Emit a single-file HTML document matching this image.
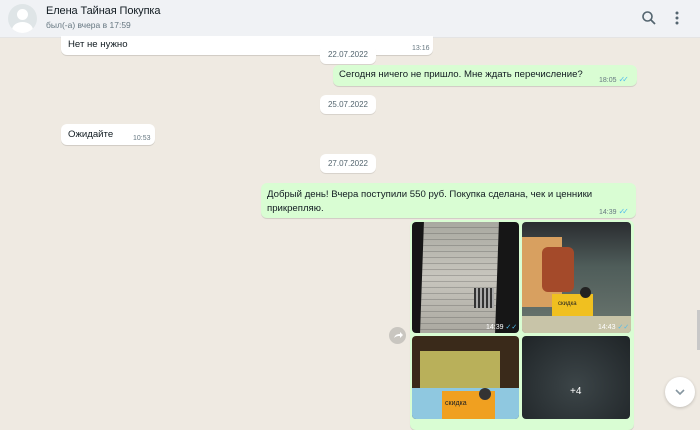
<!DOCTYPE html>
<html><head><meta charset="utf-8"><style>
*{margin:0;padding:0;box-sizing:border-box}
body{width:700px;height:419px;overflow:hidden;background:#efeae2;font-family:"Liberation Sans","DejaVu Sans",sans-serif;position:relative}
.hdr{position:absolute;left:0;top:0;width:700px;height:38px;background:#f0f2f5;border-bottom:1px solid #e4e4e4}
.av{position:absolute;left:8px;top:4px;width:29px;height:29px;border-radius:50%;background:#dfe5e7;overflow:hidden}
.av:before{content:"";position:absolute;left:9px;top:5px;width:11px;height:11px;border-radius:50%;background:#fff}
.av:after{content:"";position:absolute;left:4px;top:18px;width:21px;height:16px;border-radius:50%;background:#fff}
.name{position:absolute;left:46px;top:5px;font-size:11px;color:#111b21;letter-spacing:-0.1px}
.st{position:absolute;left:46px;top:20px;font-size:8.5px;color:#667781}
.b{position:absolute;border-radius:6px;font-size:9.6px;color:#111b21;box-shadow:0 1px 0.5px rgba(0,0,0,.13)}
.in{background:#fff}
.out{background:#d9fdd3}
.t{position:absolute;font-size:7px;color:#667781}
.tick{color:#53bdeb;font-size:8px;letter-spacing:-3px}
.d{position:absolute;left:320px;width:56px;height:19px;background:#fff;border-radius:6px;font-size:8px;color:#54656f;text-align:center;line-height:19px;box-shadow:0 1px 0.5px rgba(0,0,0,.1)}
.img{position:absolute;border-radius:4px;overflow:hidden}
</style></head><body>
<div class="hdr">
<div class="av"></div>
<div class="name">Елена Тайная Покупка</div>
<div class="st">был(-а) вчера в 17:59</div>
<svg style="position:absolute;left:641px;top:10px" width="16" height="16" viewBox="0 0 16 16"><circle cx="6.5" cy="6.5" r="4.5" fill="none" stroke="#54656f" stroke-width="1.6"/><line x1="10" y1="10" x2="14" y2="14" stroke="#54656f" stroke-width="1.8"/></svg>
<svg style="position:absolute;left:674px;top:11px" width="6" height="16"><circle cx="3" cy="2" r="1.5" fill="#54656f"/><circle cx="3" cy="7" r="1.5" fill="#54656f"/><circle cx="3" cy="12" r="1.5" fill="#54656f"/></svg>
</div>

<div class="b in" style="left:61px;top:36px;width:372px;height:19px;border-radius:0 0 6px 6px"><span style="position:absolute;left:7px;top:3px">Нет не нужно</span><span class="t" style="left:351px;top:9px">13:16</span></div>
<div class="d" style="top:45px">22.07.2022</div>
<div class="b out" style="left:333px;top:65px;width:304px;height:21px"><span style="position:absolute;left:6px;top:4px">Сегодня ничего не пришло. Мне ждать перечисление?</span><span class="t" style="left:266px;top:10px">18:05 <span class="tick">✓✓</span></span></div>
<div class="d" style="top:95px">25.07.2022</div>
<div class="b in" style="left:61px;top:124px;width:94px;height:21px"><span style="position:absolute;left:7px;top:5px">Ожидайте</span><span class="t" style="left:72px;top:11px">10:53</span></div>
<div class="d" style="top:154px">27.07.2022</div>
<div class="b out" style="left:261px;top:183px;width:375px;height:35px"><span style="position:absolute;left:6px;top:5px;line-height:14px;width:345px">Добрый день! Вчера поступили 550 руб. Покупка сделана, чек и ценники прикрепляю.</span><span class="t" style="left:338px;top:24px">14:39 <span class="tick">✓✓</span></span></div>

<div class="b out" style="left:410px;top:220px;width:224px;height:210px"></div>
<div class="img" style="left:412px;top:222px;width:107px;height:111px;background:#161616">
<div style="position:absolute;left:10px;top:0;width:75px;height:111px;background:repeating-linear-gradient(180deg,rgba(0,0,0,0) 0 5px,rgba(60,60,60,.25) 5px 6px),linear-gradient(180deg,#a8a8a0,#c8c6be 50%,#aaa8a0);transform:skewX(-2deg)"></div>
<div style="position:absolute;left:62px;top:66px;width:20px;height:20px;background:repeating-linear-gradient(90deg,#333 0 2px,#aaa 2px 4px)"></div>
<span style="position:absolute;left:74px;top:101px;font-size:7px;color:#fff">14:39 <span style="color:#53bdeb">✓✓</span></span></div>
<div class="img" style="left:522px;top:222px;width:109px;height:111px;background:linear-gradient(180deg,#2a2c30,#4f5d5a 40%,#6c7770)">
<div style="position:absolute;left:0;top:15px;width:40px;height:70px;background:#d8a060"></div>
<div style="position:absolute;left:20px;top:25px;width:32px;height:45px;background:#a44a2a;border-radius:6px"></div>
<div style="position:absolute;left:30px;top:72px;width:41px;height:22px;background:#f0c020"><span style="font-size:6px;position:absolute;left:6px;top:7px;color:#222">скидка</span></div>
<div style="position:absolute;left:58px;top:65px;width:11px;height:11px;border-radius:50%;background:#222"></div>
<div style="position:absolute;left:0;top:94px;width:109px;height:17px;background:#c8c4a8"></div>
<span style="position:absolute;left:76px;top:101px;font-size:7px;color:#fff">14:43 <span style="color:#53bdeb">✓✓</span></span></div>
<div class="img" style="left:412px;top:336px;width:107px;height:83px;background:#3a2a1a">
<div style="position:absolute;left:8px;top:15px;width:80px;height:45px;background:#b9b05a"></div>
<div style="position:absolute;left:0;top:52px;width:107px;height:31px;background:#8fc8e0"></div>
<div style="position:absolute;left:30px;top:55px;width:53px;height:28px;background:#f0a020"><span style="font-size:7px;position:absolute;left:3px;top:9px;color:#222">скидка</span></div>
<div style="position:absolute;left:67px;top:52px;width:12px;height:12px;border-radius:50%;background:#333"></div></div>
<div class="img" style="left:522px;top:336px;width:108px;height:83px;background:radial-gradient(ellipse at 50% 60%,#3c4548,#1f2427)"><span style="position:absolute;left:48px;top:50px;font-size:10px;color:#fff">+4</span></div>

<div style="position:absolute;left:389px;top:327px;width:17px;height:17px;border-radius:50%;background:#c9c6c0"><svg width="17" height="17" viewBox="0 0 17 17"><path d="M5 11c1-3 3-4 6-4V5l3 3-3 3V9c-2 0-4 0-6 2z" fill="#fff"/></svg></div>
<div style="position:absolute;left:665px;top:377px;width:30px;height:30px;border-radius:50%;background:#fff;box-shadow:0 1px 3px rgba(0,0,0,.2)"><svg width="30" height="30"><path d="M11 13l4 4 4-4" fill="none" stroke="#8696a0" stroke-width="1.6"/></svg></div>
<div style="position:absolute;left:697px;top:310px;width:3px;height:40px;background:#c8c8c8"></div>
</body></html>
